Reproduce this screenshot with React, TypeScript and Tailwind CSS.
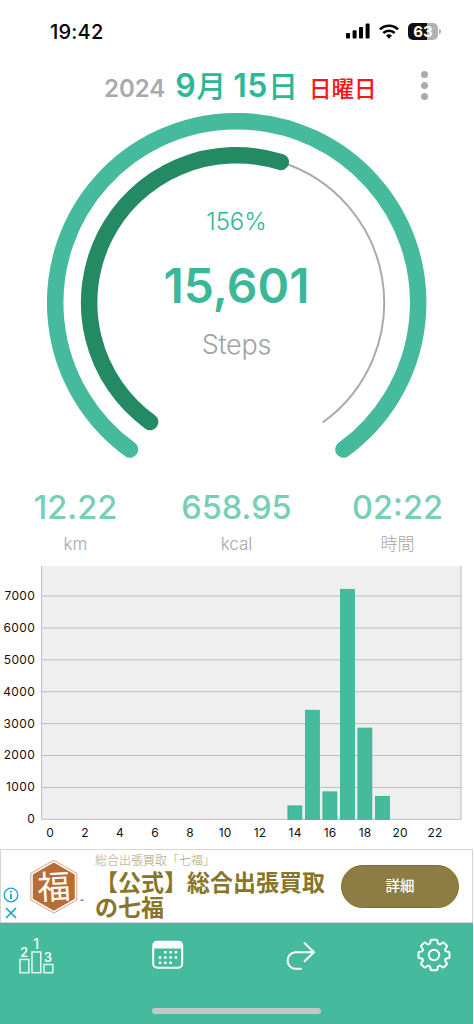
import React from 'react';

const GREEN = '#45ba9c';

interface BarData {
    hour: number;
    steps: number;
}

const hourly: BarData[] = [
    { hour: 14, steps: 420 },
    { hour: 15, steps: 3420 },
    { hour: 16, steps: 860 },
    { hour: 17, steps: 7210 },
    { hour: 18, steps: 2860 },
    { hour: 19, steps: 720 },
];

const stats = [
    { value: '12.22', unit: 'km' },
    { value: '658.95', unit: 'kcal' },
    { value: '02:22', unit: '時間' },
];

const StatusBar: React.FC = () => (
    <div className="flex h-[62px] items-center justify-between pl-[50px] pr-[32px] text-black">
        <span className="mt-[2px] text-[20px] font-medium leading-none tracking-[0.2px]">19:42</span>
        <div className="flex items-center">
            <svg width="24" height="16" viewBox="0 0 24 16" fill="currentColor">
                <rect x="0" y="10" width="4" height="5.5" rx="1" />
                <rect x="6.6" y="7.3" width="4" height="8.2" rx="1" />
                <rect x="13" y="4" width="4" height="11.5" rx="1" />
                <rect x="19.6" y="0.5" width="4" height="15" rx="1" />
            </svg>
            <svg className="ml-[9px]" width="20" height="15" viewBox="0 0 20 15" fill="none" stroke="currentColor" strokeWidth="2.5">
                <path d="M0.9 5.4a13 13 0 0 1 18.2 0" />
                <path d="M4.3 9a8.1 8.1 0 0 1 11.4 0" />
                <path d="M10 14.7l-3-3.1a4.3 4.3 0 0 1 6 0z" fill="currentColor" stroke="none" />
            </svg>
            <div className="ml-[9px] flex h-[17px] w-[30px] items-center justify-center rounded-[5px] bg-linear-to-r from-[#111] from-63% to-[#b2b2b2] to-63%">
                <span className="text-[15px] font-bold leading-none text-white">63</span>
            </div>
            <div className="ml-[1px] h-[5px] w-[2px] rounded-r-full bg-[#b2b2b2]" />
        </div>
    </div>
);

const Header: React.FC = () => (
    <div className="flex h-[51px] items-start justify-between pl-[104px] pr-[45px]">
        <div className="flex items-baseline whitespace-nowrap pt-[4px] font-semibold leading-[40px]">
            <span className="text-[24px] text-[#aaaaaa]">2024</span>
            <span className="ml-[10px] text-[32px] text-[#2eb696]">9</span>
            <span className="ml-[0.5px] text-[30px] font-medium text-[#2eb696]">月</span>
            <span className="ml-[7px] text-[32px] tracking-[0.5px] text-[#2eb696]">15</span>
            <span className="text-[30px] font-medium text-[#2eb696]">日</span>
            <span className="ml-[11px] text-[22.5px] font-medium text-[#ff1414]">日曜日</span>
        </div>
        <div className="flex flex-col gap-[4px] pt-[9px]">
            <span className="size-[7px] rounded-full bg-[#aaaaaa]" />
            <span className="size-[7px] rounded-full bg-[#aaaaaa]" />
            <span className="size-[7px] rounded-full bg-[#aaaaaa]" />
        </div>
    </div>
);

const Gauge: React.FC = () => (
    <div className="grid h-[367px]">
        <svg className="[grid-area:1/1]" width="473" height="367" viewBox="0 113 473 367" fill="none">
            <path d="M130 449.5A181.5 181.5 0 1 1 343.4 449.5" stroke={GREEN} strokeWidth="16.5" strokeLinecap="round" />
            <path d="M280.8 162A147.4 147.4 0 0 1 323.3 422" stroke="#aaaaaa" strokeWidth="2" strokeLinecap="round" />
            <path d="M150.1 422A147.4 147.4 0 0 1 280.8 162" stroke="#248a63" strokeWidth="16.5" strokeLinecap="round" />
        </svg>
        <div className="flex flex-col items-center pt-[93px] [grid-area:1/1]">
            <span className="text-[24px] font-light leading-[32px] text-[#2eb696]">156%</span>
            <span className="mt-[18px] text-[48px] font-semibold leading-[60px] text-[#3cb797]">15,601</span>
            <span className="mt-[15px] text-[27px] font-light leading-[28px] tracking-[-0.2px] text-[#a2a2a2]">Steps</span>
        </div>
    </div>
);

const Stats: React.FC = () => (
    <div className="grid h-[86px] grid-cols-[151px_171px_151px] pt-[8px]">
        {stats.map((stat) => (
            <div key={stat.unit} className="flex flex-col items-center">
                <span className="text-[32.5px] font-medium leading-[40px] text-[#78ceb7]">{stat.value}</span>
                <span className="mt-[4px] text-[17px] font-light leading-[24px] text-[#a6a6a6]">{stat.unit}</span>
            </div>
        ))}
    </div>
);

const Chart: React.FC = () => {
    const base = 253.3;
    const perThousand = 31.9;
    const gridSteps = [0, 1000, 2000, 3000, 4000, 5000, 6000, 7000];
    const hours = [0, 2, 4, 6, 8, 10, 12, 14, 16, 18, 20, 22];
    const yFor = (steps: number) => base - (steps / 1000) * perThousand;
    const xFor = (hour: number) => 49.9 + hour * 17.5;

    return (
        <svg width="473" height="283" viewBox="0 0 473 283" fontSize="12">
            <rect x="41" y="0" width="420.5" height={base} fill="#efefef" />
            {gridSteps.map((s) => (
                <g key={s}>
                    <line x1="41" x2="461.5" y1={yFor(s)} y2={yFor(s)} stroke="#bdbdbd" />
                    <text x="35.3" y={yFor(s) + 3.9} textAnchor="end" fill="#111" letterSpacing="0.4">{s}</text>
                </g>
            ))}
            <path d={`M41.5 0V${base}M461 0V${base}`} stroke="#c0c0c0" />
            {hourly.map((d) => (
                <rect
                    key={d.hour}
                    x={xFor(d.hour) - 7}
                    y={yFor(d.steps)}
                    width="14"
                    height={base - yFor(d.steps)}
                    fill={GREEN}
                    stroke="#22b28d"
                    strokeWidth="0.7"
                />
            ))}
            {hours.map((h) => (
                <text key={h} x={xFor(h) + 0.2} y="270.5" textAnchor="middle" fill="#111" letterSpacing="0.2">{h}</text>
            ))}
        </svg>
    );
};

const AdBanner: React.FC = () => (
    <div className="flex h-[74px] border border-[#d4d4d4] bg-white">
        <div className="flex w-[20px] flex-col items-center gap-[4px] pt-[37px]">
            <svg width="16" height="16" viewBox="0 0 16 16" fill="none" stroke="#1ba3cc" strokeWidth="1.3">
                <circle cx="8" cy="8" r="6.8" />
                <path d="M8 7v5M8 3.8v1.8" strokeWidth="1.8" />
            </svg>
            <svg width="12" height="12" viewBox="0 0 12 12" fill="none" stroke="#1ba3cc" strokeWidth="1.7">
                <path d="M1 1l10 10M11 1L1 11" />
            </svg>
        </div>
        <svg className="ml-[8px] mt-[8px] shrink-0" width="56" height="58" viewBox="0 0 56 58">
            <path d="M24.8 2.2L47.8 15.3V42L24.8 55L1.8 42V15.3Z" fill="#fff" stroke="#c98d64" strokeWidth="0.8" />
            <path d="M24.8 4.6L45.8 16.5V40.8L24.8 52.7L3.8 40.8V16.5Z" fill="#b86d35" />
            <text x="24.8" y="41" textAnchor="middle" fontSize="33" fill="#fff" transform="rotate(-3 24.8 29)">福</text>
            <rect x="51.5" y="41.5" width="3" height="1.5" fill="#9a7659" />
        </svg>
        <div className="ml-[10px] flex w-[246px] shrink-0 flex-col whitespace-nowrap">
            <span className="mt-[2px] text-[12px] font-light leading-[18px] text-[#aaa17d]">総合出張買取「七福」</span>
            <p className="mt-[1px] text-[23px] font-semibold leading-[25px] text-[#87752a]">
                【公式】総合出張買取
                <br />
                の七福
            </p>
        </div>
        <div className="mt-[15px] flex h-[43px] w-[118px] shrink-0 items-center justify-center rounded-full border border-[#87700f] bg-[#8d7d45]">
            <span className="text-[14.5px] font-medium leading-none text-white">詳細</span>
        </div>
    </div>
);

const TabBar: React.FC = () => (
    <div className="flex h-[101px] flex-col justify-between bg-[#45ba9c]">
        <div className="flex items-start pl-[18px] pt-[12px]">
            <svg width="36" height="40" viewBox="0 -2 36 40" overflow="visible" fill="none" stroke="#d9f3ec" strokeWidth="1.6">
                <rect x="2" y="22.4" width="8.8" height="13.3" />
                <rect x="14" y="15" width="8.8" height="20.7" />
                <rect x="26" y="27.5" width="8.8" height="8.2" />
                <g fill="#fff" stroke="none" fontSize="12.5" fontWeight="600" textAnchor="middle">
                    <text x="6.2" y="19.7">2</text>
                    <text x="18.2" y="12" fontSize="14" fontWeight="500">1</text>
                    <text x="30" y="24.7">3</text>
                </g>
            </svg>
            <svg className="ml-[98px] mt-[5px]" width="32" height="30" viewBox="0 0 32 30" fill="none">
                <rect x="1.2" y="1.7" width="29" height="26" rx="4" stroke="#fff" strokeWidth="2" />
                <path d="M1 8.4V5a4 4 0 0 1 4-4h21.5a4 4 0 0 1 4 4v3.4z" fill="#fff" />
                <g fill="#fff">
                    {[12, 17.2, 22.4].map((y, row) =>
                        [7, 12.3, 17.6, 22.9]
                            .filter((_, col) => !(row === 0 && col === 0) && !(row === 2 && col === 3))
                            .map((x) => <rect key={`${x}-${y}`} x={x - 0.3} y={y - 1} width="2.6" height="2.6" rx="0.5" />)
                    )}
                </g>
            </svg>
            <svg className="ml-[100px] mt-[6px]" width="32" height="32" viewBox="0 0 32 32" fill="none" stroke="#fff" strokeWidth="2" strokeLinecap="round" strokeLinejoin="round">
                <path d="M20.5 2L30 11.3L20.5 20.2M29.5 11.3H11A8.3 8.3 0 0 0 11 27.8H17" />
            </svg>
            <svg className="ml-[101px] mt-[3px]" width="34" height="34" viewBox="-17 -17 34 34" fill="none" stroke="#fff" strokeWidth="2" strokeLinejoin="round">
                <path d="M-2.2-15.3H2.2Q3.2-15.3 3.4-14.2L3.8-12Q4-11.2 4.9-10.8Q5.8-10.4 6.6-10.9L8.6-12.3Q9.4-12.8 10.1-12.1L12.6-9.5Q13.3-8.8 12.7-8L11.4-6.2Q10.8-5.4 11.2-4.4Q11.5-3.8 12.4-3.6L14.5-3.2Q15.5-3 15.5-2V2Q15.5 3 14.5 3.2L12.4 3.6Q11.5 3.8 11.2 4.4Q10.8 5.4 11.4 6.2L12.7 8Q13.3 8.8 12.6 9.5L10.1 12.1Q9.4 12.8 8.6 12.3L6.6 10.9Q5.8 10.4 4.9 10.8Q4 11.2 3.8 12L3.4 14.2Q3.2 15.3 2.2 15.3H-2.2Q-3.2 15.3-3.4 14.2L-3.8 12Q-4 11.2-4.9 10.8Q-5.8 10.4-6.6 10.9L-8.6 12.3Q-9.4 12.8-10.1 12.1L-12.6 9.5Q-13.3 8.8-12.7 8L-11.4 6.2Q-10.8 5.4-11.2 4.4Q-11.5 3.8-12.4 3.6L-14.5 3.2Q-15.5 3-15.5 2V-2Q-15.5-3-14.5-3.2L-12.4-3.6Q-11.5-3.8-11.2-4.4Q-10.8-5.4-11.4-6.2L-12.7-8Q-13.3-8.8-12.6-9.5L-10.1-12.1Q-9.4-12.8-8.6-12.3L-6.6-10.9Q-5.8-10.4-4.9-10.8Q-4-11.2-3.8-12L-3.4-14.2Q-3.2-15.3-2.2-15.3Z" />
                <circle r="5.2" />
            </svg>
        </div>
        <div className="mb-[10px] ml-[152px] h-[6px] w-[169px] rounded-full bg-[#c6c6c6]" />
    </div>
);

const App: React.FC = () => (
    <div className="h-[1024px] w-[474px] overflow-hidden bg-white pr-px font-[Inter,'Noto_Sans_CJK_JP',sans-serif]">
        <StatusBar />
        <Header />
        <Gauge />
        <Stats />
        <div className="h-[283px]">
            <Chart />
        </div>
        <AdBanner />
        <TabBar />
    </div>
);

export default App;
